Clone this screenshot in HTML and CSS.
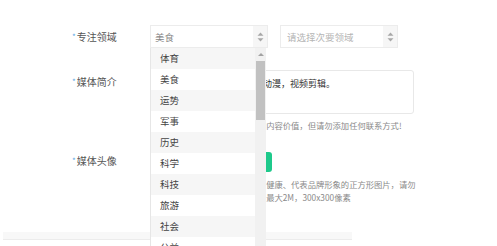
FILE: index.html
```html
<!DOCTYPE html>
<html lang="zh-CN">
<head>
    <meta charset="UTF-8">
    <title>媒体信息</title>
    <link rel="stylesheet" href="styles.css">
</head>
<body>
    <div class="form">
        <div class="row">
            <div class="label"><i>*</i>专注领域</div>
            <div class="selects">
                <div class="select primary">
                    <span class="value">美食</span>
                    <span class="spin">
                        <svg width="7" height="10" viewBox="0 0 7 10"><path d="M3.5 0.5 L6.5 3.8 L0.5 3.8 Z M3.5 9.5 L6.5 6.2 L0.5 6.2 Z" fill="#a8a8a8"/></svg>
                    </span>
                    <!-- 下拉列表 -->
                    <div class="dropdown">
                        <ul class="options">
                            <li>体育</li>
                            <li>美食</li>
                            <li>运势</li>
                            <li>军事</li>
                            <li>历史</li>
                            <li>科学</li>
                            <li>科技</li>
                            <li>旅游</li>
                            <li>社会</li>
                            <li>公益</li>
                        </ul>
                        <div class="scrollbar">
                            <span class="arrow"></span>
                            <span class="thumb"></span>
                        </div>
                    </div>
                </div>
                <div class="select">
                    <span class="placeholder">请选择次要领域</span>
                    <span class="spin">
                        <svg width="7" height="10" viewBox="0 0 7 10"><path d="M3.5 0.5 L6.5 3.8 L0.5 3.8 Z M3.5 9.5 L6.5 6.2 L0.5 6.2 Z" fill="#a8a8a8"/></svg>
                    </span>
                </div>
            </div>
        </div>

        <div class="row row-intro">
            <div class="label"><i>*</i>媒体简介</div>
            <div class="field">
                <div class="textarea">主要分享影视资讯及二次元动漫，视频剪辑。</div>
                <p class="hint">介绍需简洁明了，突出该媒体的内容价值，但请勿添加任何联系方式!</p>
            </div>
        </div>

        <div class="row row-avatar">
            <div class="label"><i>*</i>媒体头像</div>
            <div class="field">
                <button class="upload">上传图片</button>
                <p class="hint hint-first">请上传一张清晰美观、内容积极健康、代表品牌形象的正方形图片，请勿</p>
                <p class="hint">涉及侵权内容，支持常见格式，最大2M，300x300像素</p>
            </div>
        </div>
    </div>
    <div class="footer-line"></div>
</body>
</html>
```

FILE: styles.css
```css
html, body {
    height: 100%;
    overflow: hidden;
}
body {
    margin: 0;
    background: #fff;
    font-family: "Noto Sans CJK SC", "Noto Sans", sans-serif;
    color: #333;
}
.form {
    padding: 25px 0 0 72px;
}
.row {
    display: flex;
    align-items: flex-start;
}
.label {
    width: 78px;
    flex: none;
    font-size: 10px;
    line-height: 23px;
    color: #555;
}
.label i {
    font-style: normal;
    font-size: 8px;
    color: #5aa9e6;
    margin-right: 1px;
    vertical-align: 1px;
}
.selects {
    display: flex;
    gap: 12px;
}
.select {
    position: relative;
    width: 118px;
    height: 23px;
    box-sizing: border-box;
    border: 1px solid #ececec;
    display: flex;
    align-items: center;
    font-size: 9.5px;
}
.select .value {
    flex: 1;
    padding-left: 4px;
    color: #888;
}
.select .placeholder {
    flex: 1;
    padding-left: 6px;
    color: #b5b5b5;
}
.spin {
    width: 14px;
    height: 100%;
    background: #f6f6f6;
    display: flex;
    align-items: center;
    justify-content: center;
}
.spin svg {
    display: block;
}
.dropdown {
    position: absolute;
    top: 22px;
    left: -1px;
    width: 116px;
    height: 230px;
    display: flex;
    background: #fff;
    border-left: 1px solid #e6e6e6;
    box-sizing: border-box;
    z-index: 5;
}
.options {
    flex: 1;
    list-style: none;
    margin: 0;
    padding: 0;
    overflow: hidden;
}
.options li {
    height: 21px;
    line-height: 21px;
    padding-left: 9px;
    font-size: 9.5px;
    color: #444;
}
.options li:nth-child(odd) {
    background: #f6f6f6;
}
.scrollbar {
    width: 11px;
    flex: none;
    background: #f1f1f1;
    display: flex;
    flex-direction: column;
    align-items: center;
}
.scrollbar .arrow {
    margin-top: 5px;
    width: 0;
    height: 0;
    border-left: 3px solid transparent;
    border-right: 3px solid transparent;
    border-bottom: 3px solid #a3a3a3;
}
.scrollbar .thumb {
    margin-top: 5px;
    width: 9px;
    height: 59px;
    background: #c1c1c1;
}
.row-intro {
    margin-top: 22px;
}
.textarea {
    width: 264px;
    height: 44px;
    box-sizing: border-box;
    border: 1px solid #e8e8e8;
    border-radius: 3px;
    padding: 6px 4px;
    font-size: 9px;
    line-height: 13px;
    color: #333;
    white-space: nowrap;
    overflow: hidden;
}
.hint {
    margin: 0;
    font-size: 8.3px;
    line-height: 13px;
    color: #8a8a8a;
    white-space: nowrap;
}
.row-intro .hint {
    margin-top: 5px;
}
.row-avatar {
    margin-top: 20px;
}
.row-avatar .label {
    line-height: 17px;
}
.upload {
    display: block;
    width: 122px;
    height: 20px;
    border: none;
    border-radius: 3px;
    background: #1ec98b;
    color: #fff;
    font-family: inherit;
    font-size: 9px;
    padding: 0;
}
.hint-first {
    margin-top: 6px;
}
.footer-line {
    margin: 28px 0 0 3px;
    width: 349px;
    height: 7px;
    background: #f8f8f8;
    border-bottom: 1px solid #ececec;
}
```
